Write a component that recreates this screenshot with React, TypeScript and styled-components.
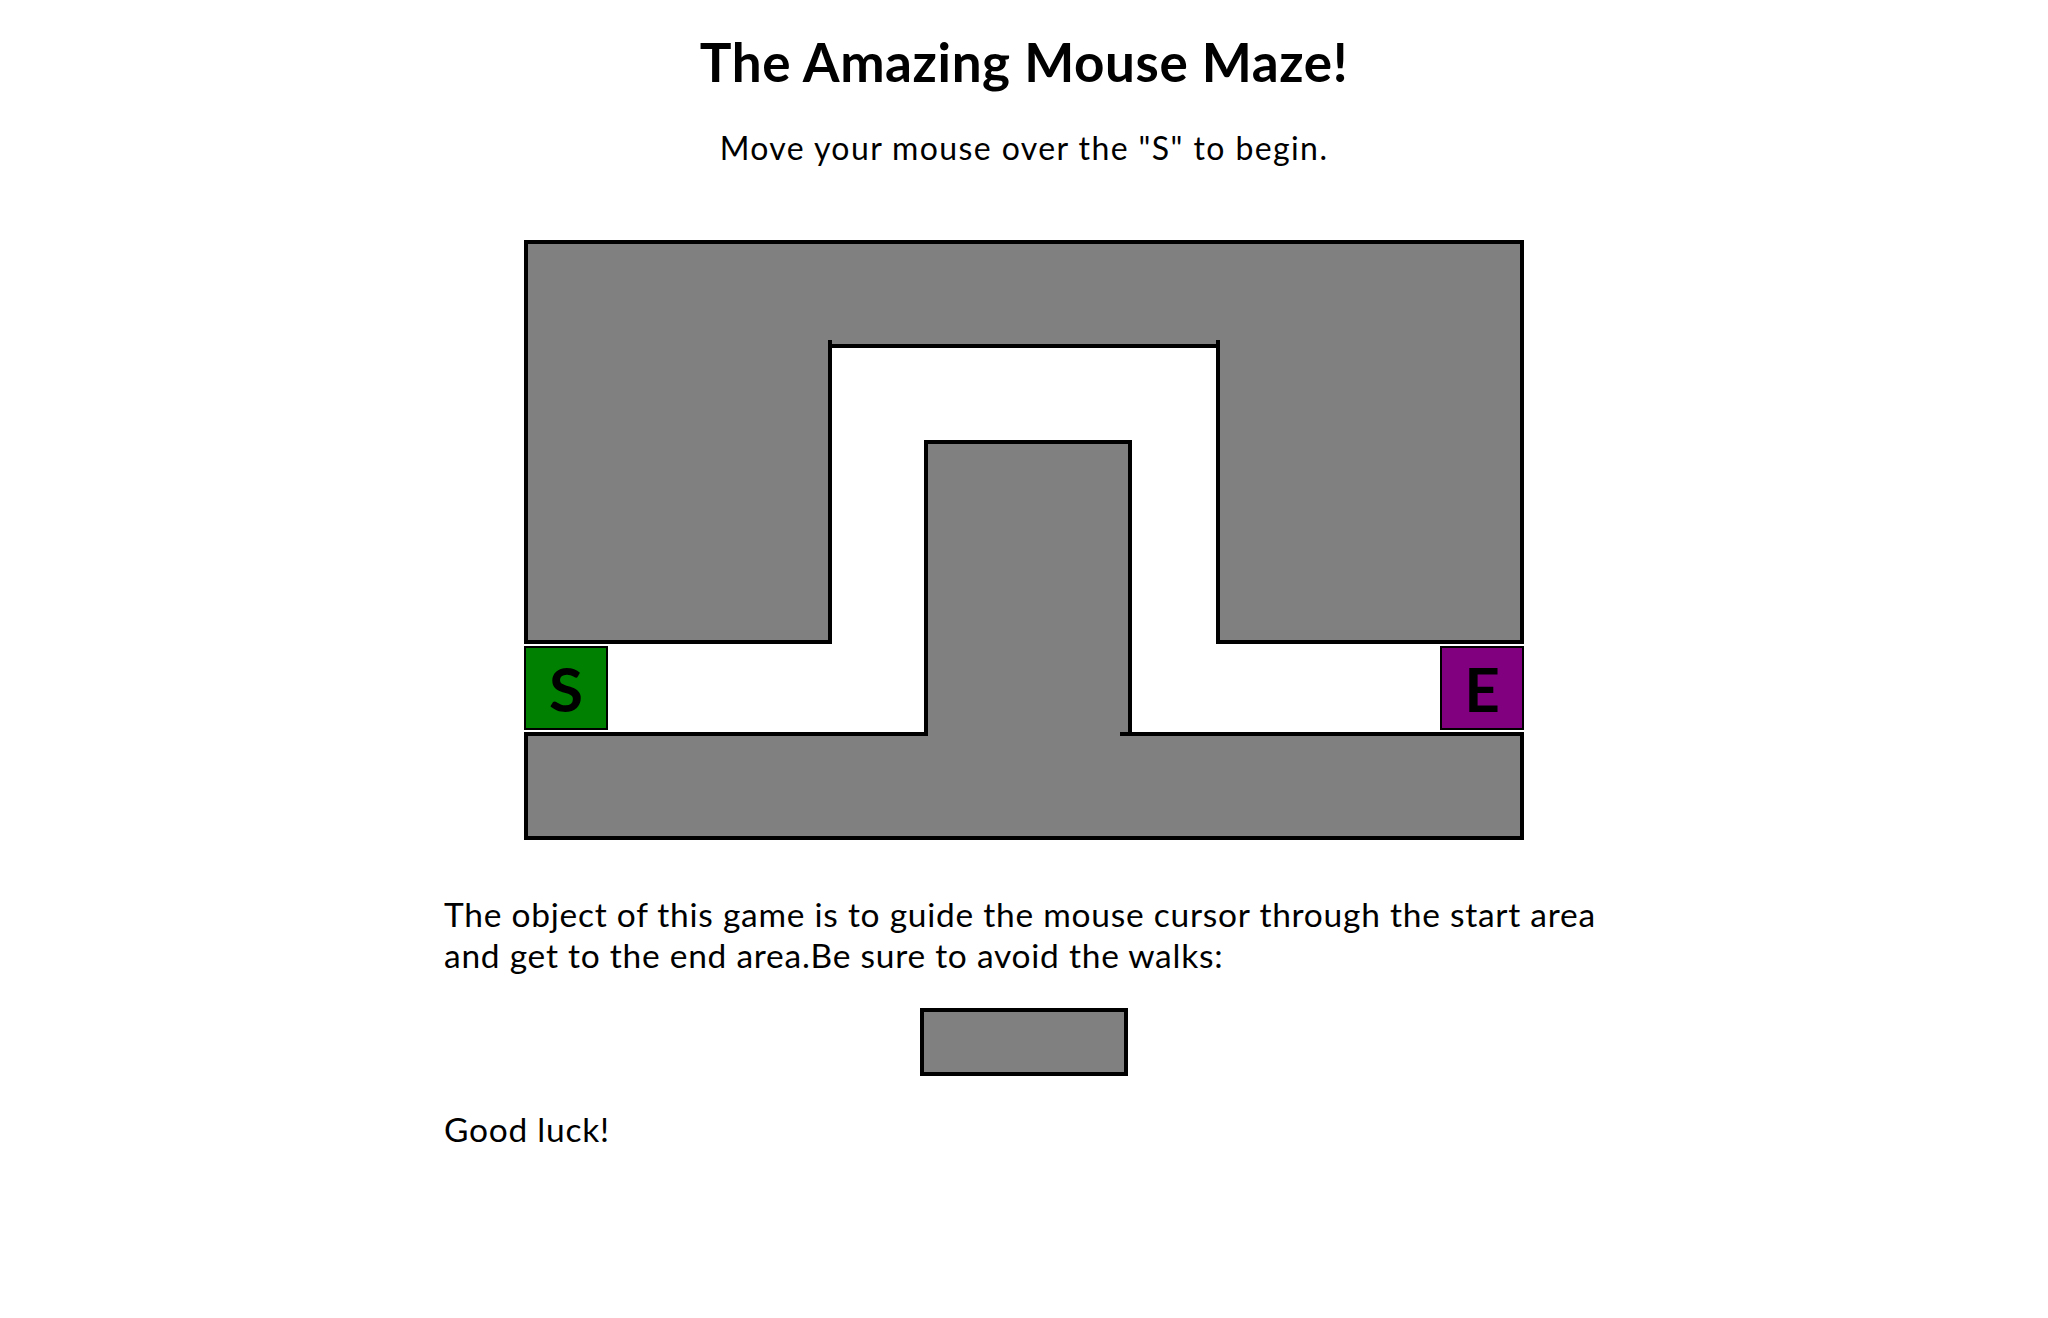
import React from "react";
import styled, { createGlobalStyle } from "styled-components";

const Global = createGlobalStyle`
  html, body { margin: 0; padding: 0; background: #ffffff; }
  body { font-family: "Lato", "DejaVu Sans", sans-serif; color: #000000; }
`;

const Page = styled.main`
  display: flex;
  flex-direction: column;
  align-items: center;
  padding-top: 32px;
`;

const Title = styled.h1`
  margin: 0;
  font-family: "Lato", "DejaVu Sans", sans-serif;
  font-size: 53px;
  font-weight: 700;
  line-height: 60px;
  letter-spacing: 0.6px;
`;

const Subtitle = styled.p`
  margin: 38px 0 0;
  font-size: 32px;
  font-weight: 400;
  line-height: 36px;
  letter-spacing: 1.4px;
`;

const Maze = styled.div`
  position: relative;
  width: 1000px;
  height: 600px;
  margin-top: 74px;
`;

type Sides = { $t?: boolean; $r?: boolean; $b?: boolean; $l?: boolean };
type Box = { $x: number; $y: number; $w: number; $h: number };

const Wall = styled.div<Sides & Box>`
  position: absolute;
  box-sizing: border-box;
  left: ${(p) => p.$x}px;
  top: ${(p) => p.$y}px;
  width: ${(p) => p.$w}px;
  height: ${(p) => p.$h}px;
  background: #808080;
  border-style: solid;
  border-color: #000000;
  border-top-width: ${(p) => (p.$t ? 4 : 0)}px;
  border-right-width: ${(p) => (p.$r ? 4 : 0)}px;
  border-bottom-width: ${(p) => (p.$b ? 4 : 0)}px;
  border-left-width: ${(p) => (p.$l ? 4 : 0)}px;
`;

const Pad = styled.div<{ $x: number; $y: number; $color: string }>`
  position: absolute;
  box-sizing: border-box;
  left: ${(p) => p.$x}px;
  top: ${(p) => p.$y}px;
  width: 84px;
  height: 84px;
  background: ${(p) => p.$color};
  border: 2px solid #000000;
  display: flex;
  align-items: center;
  justify-content: center;
  font-family: "Lato", "DejaVu Sans", sans-serif;
  font-size: 62px;
  font-weight: 700;
  line-height: 1;
  color: #000000;
`;

const Text = styled.p<{ $gap: number }>`
  box-sizing: border-box;
  width: 1180px;
  margin: ${(p) => p.$gap}px 0 0 20px;
  font-size: 33.5px;
  line-height: 41px;
  letter-spacing: 0.75px;
  text-align: left;
`;

const Sample = styled.div`
  box-sizing: border-box;
  width: 208px;
  height: 68px;
  margin-top: 32px;
  background: #808080;
  border: 4px solid #000000;
`;

const walls = [
  { x: 0, y: 0, w: 1000, h: 108, t: true, r: true, b: true, l: true },
  { x: 0, y: 100, w: 308, h: 304, r: true, b: true, l: true },
  { x: 692, y: 100, w: 308, h: 304, r: true, b: true, l: true },
  { x: 0, y: 492, w: 1000, h: 108, t: true, r: true, b: true, l: true },
  { x: 400, y: 200, w: 208, h: 296, t: true, r: true, l: true },
  { x: 596, y: 492, w: 404, h: 108, t: true, r: true, b: true },
];

export default function App() {
  return (
    <>
      <Global />
      <Page>
        <Title>The Amazing Mouse Maze!</Title>
        <Subtitle>Move your mouse over the "S" to begin.</Subtitle>
        <Maze>
          {walls.map((w, i) => (
            <Wall
              key={i}
              $x={w.x}
              $y={w.y}
              $w={w.w}
              $h={w.h}
              $t={w.t}
              $r={w.r}
              $b={w.b}
              $l={w.l}
            />
          ))}
          <Pad $x={0} $y={406} $color="#008000">S</Pad>
          <Pad $x={916} $y={406} $color="#800080">E</Pad>
        </Maze>
        <Text $gap={54}>
          The object of this game is to guide the mouse cursor through the start area and get to the end area.Be sure to avoid the walks:
        </Text>
        <Sample />
        <Text $gap={33}>Good luck!</Text>
      </Page>
    </>
  );
}
